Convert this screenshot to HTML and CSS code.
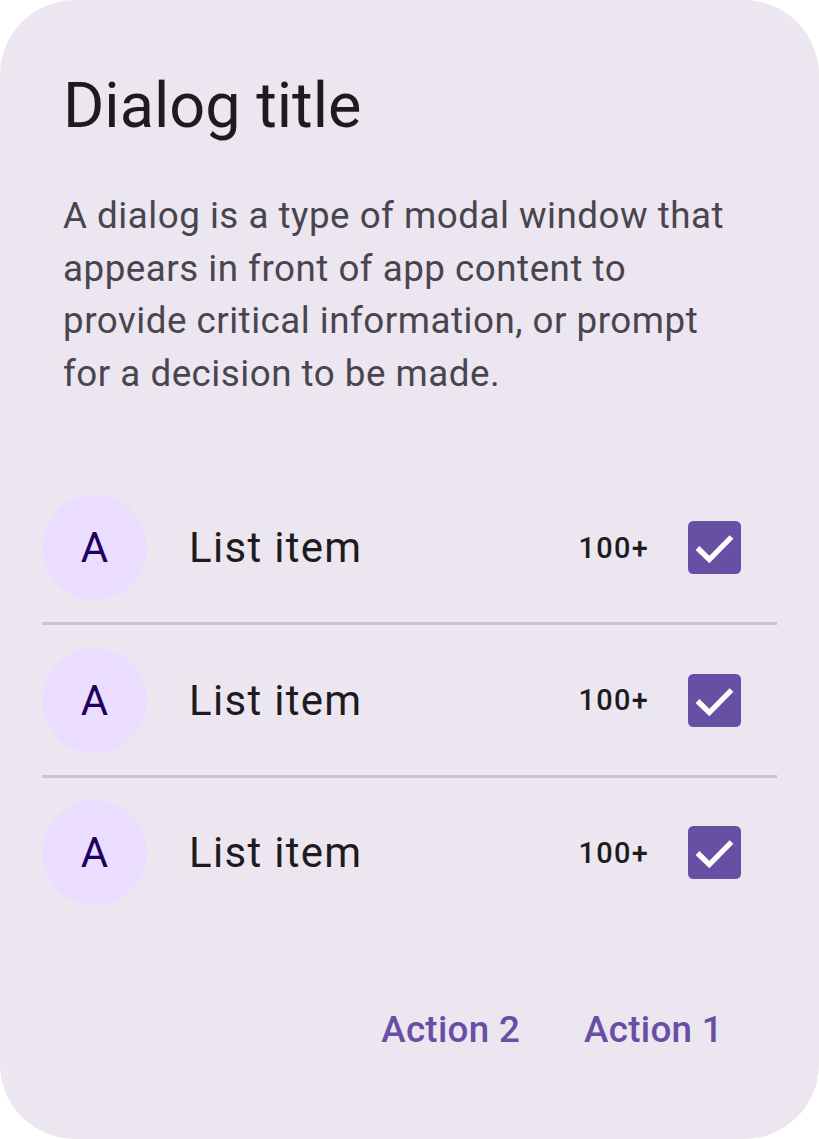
FILE: index.html
```html
<!DOCTYPE html>
<html lang="en">
<head>
<meta charset="utf-8">
<title>Dialog</title>
<link rel="stylesheet" href="styles.css">
</head>
<body>
<div class="dialog">
  <h1 class="title">Dialog title</h1>
  <p class="supporting">A dialog is a type of modal window that appears in front of app content to provide critical information, or prompt for a decision to be made.</p>
  <ul class="list">
    <li class="row">
      <span class="avatar">A</span>
      <span class="label">List item</span>
      <span class="meta">100+</span>
      <span class="check"><svg viewBox="0 0 53 53" width="53" height="53"><polyline points="9.5,27 21.3,38.5 43.5,16" fill="none" stroke="#fff" stroke-width="5.3"/></svg></span>
    </li>
    <li class="divider"></li>
    <li class="row">
      <span class="avatar">A</span>
      <span class="label">List item</span>
      <span class="meta">100+</span>
      <span class="check"><svg viewBox="0 0 53 53" width="53" height="53"><polyline points="9.5,27 21.3,38.5 43.5,16" fill="none" stroke="#fff" stroke-width="5.3"/></svg></span>
    </li>
    <li class="divider"></li>
    <li class="row">
      <span class="avatar">A</span>
      <span class="label">List item</span>
      <span class="meta">100+</span>
      <span class="check"><svg viewBox="0 0 53 53" width="53" height="53"><polyline points="9.5,27 21.3,38.5 43.5,16" fill="none" stroke="#fff" stroke-width="5.3"/></svg></span>
    </li>
  </ul>
  <div class="actions">
    <button class="btn">Action 2</button>
    <button class="btn">Action 1</button>
  </div>
</div>
</body>
</html>
```
FILE: styles.css
```css
html, body {
  margin: 0;
  padding: 0;
  background: #ffffff;
}
.dialog {
  width: 819px;
  height: 1139px;
  box-sizing: border-box;
  background: #ECE6F0;
  border-radius: 75px;
  padding-top: 64px;
  display: flex;
  flex-direction: column;
  font-family: Roboto, "Noto Sans", sans-serif;
  overflow: hidden;
}
.title {
  margin: 0 63px;
  font-size: 63px;
  line-height: 84px;
  font-weight: 400;
  color: #1D1B20;
}
.supporting {
  margin: 42px 80px 0 63px;
  font-size: 36.75px;
  line-height: 52.5px;
  letter-spacing: 0.5px;
  color: #49454F;
}
.list {
  list-style: none;
  margin: 72.75px 0 0;
  padding: 0 42px;
}
.row {
  height: 149.5px;
  display: flex;
  align-items: center;
}
.avatar {
  width: 105px;
  height: 105px;
  border-radius: 50%;
  background: #EADDFF;
  color: #21005D;
  font-size: 42px;
  display: flex;
  align-items: center;
  justify-content: center;
  flex: none;
}
.label {
  margin-left: 42px;
  flex: 1;
  font-size: 42px;
  letter-spacing: 1.31px;
  color: #1D1B20;
}
.meta {
  font-size: 28.9px;
  font-weight: 500;
  letter-spacing: 1.31px;
  color: #1D1B20;
}
.check {
  margin-left: 39px;
  margin-right: 36px;
  width: 53px;
  height: 53px;
  border-radius: 5.25px;
  background: #6750A4;
  display: flex;
}
.divider {
  height: 3px;
  background: #CAC4D0;
}
.actions {
  margin-top: 50.5px;
  padding-right: 64.5px;
  display: flex;
  justify-content: flex-end;
  gap: 1px;
}
.btn {
  height: 105px;
  padding: 0 31.5px;
  border: none;
  background: transparent;
  font-family: Roboto, "Noto Sans", sans-serif;
  font-size: 36.75px;
  font-weight: 500;
  letter-spacing: 0.3px;
  line-height: 52.5px;
  color: #6750A4;
}
```
